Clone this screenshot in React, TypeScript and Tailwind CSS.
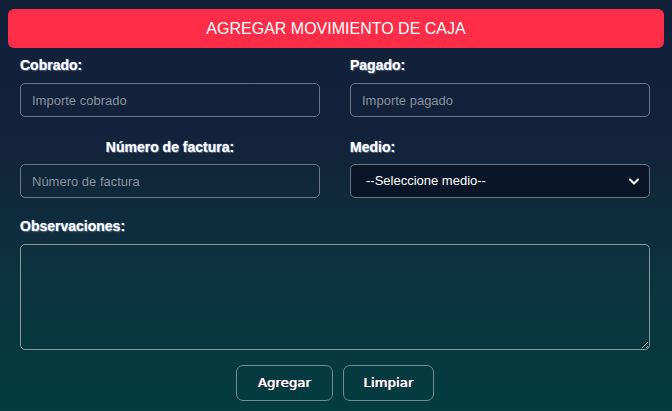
import React from "react";

export default function App() {
  const label = "text-[14px] font-bold text-white [text-shadow:0_0_1px_#9ad,1px_1px_1px_rgba(255,255,255,0.3)]";
  const input =
    "w-full h-[34px] rounded-[5px] border border-[#6b7585] bg-transparent px-[11px] text-[13px] text-white placeholder:text-[#8892a0] outline-none";
  const btn =
    "h-[36px] rounded-[7px] border border-[#6f8d92] text-white text-[13px] font-normal [text-shadow:-0.6px_0_0_#f66,0.6px_0_0_#6df,0_0_0.5px_#fff]";
  return (
    <div
      className="w-full h-[411px] overflow-hidden bg-[linear-gradient(to_bottom,#13203a_0%,#13213a_30%,#0c3340_70%,#023d40_100%)]"
      style={{ fontFamily: '"Liberation Sans", Arial, sans-serif' }}
    >
      <div className="px-[8px] pt-[9px]">
        <div className="h-[39px] rounded-[6px] bg-[#ff2d48] flex items-center justify-center text-white text-[16px]">
          AGREGAR MOVIMIENTO DE CAJA
        </div>
      </div>
      <div className="pl-[20px] pr-[22px]">
        <div className="grid grid-cols-2 gap-x-[30px]">
          <div>
            <div className={`${label} mt-[9px] h-[17px] leading-[17px]`}>Cobrado:</div>
            <div className="mt-[9px]">
              <input className={input} placeholder="Importe cobrado" />
            </div>
          </div>
          <div>
            <div className={`${label} mt-[9px] h-[17px] leading-[17px]`}>Pagado:</div>
            <div className="mt-[9px]">
              <input className={input} placeholder="Importe pagado" />
            </div>
          </div>
          <div>
            <div className={`${label} mt-[22px] h-[17px] leading-[17px] text-center`}>Número de factura:</div>
            <div className="mt-[8px]">
              <input className={input} placeholder="Número de factura" />
            </div>
          </div>
          <div>
            <div className={`${label} mt-[22px] h-[17px] leading-[17px]`}>Medio:</div>
            <div className="mt-[8px] relative">
              <div className="w-full h-[34px] rounded-[5px] border border-[#6b7585] bg-[#0b1528] pl-[15px] pr-[10px] flex items-center justify-between text-[13px] text-white">
                <span>--Seleccione medio--</span>
                <svg width="10" height="7" viewBox="0 0 10 7" fill="none">
                  <path d="M1 1.5L5 5.5L9 1.5" stroke="white" strokeWidth="2" strokeLinecap="round" strokeLinejoin="round" />
                </svg>
              </div>
            </div>
          </div>
        </div>
        <div className={`${label} mt-[20px] h-[17px] leading-[17px]`}>Observaciones:</div>
        <div className="mt-[9px]">
          <textarea className="block w-full h-[106px] rounded-[5px] border border-[#8a96a0] bg-transparent text-white outline-none resize-y" />
        </div>
        <div className="flex justify-center gap-[10px] mt-[15px]">
          <button className={`${btn} w-[97px]`} style={{ fontFamily: '"DejaVu Sans", sans-serif', letterSpacing: "0.2px" }}>
            Agregar
          </button>
          <button className={`${btn} w-[91px]`} style={{ fontFamily: '"DejaVu Sans", sans-serif', letterSpacing: "0.2px" }}>
            Limpiar
          </button>
        </div>
      </div>
    </div>
  );
}
